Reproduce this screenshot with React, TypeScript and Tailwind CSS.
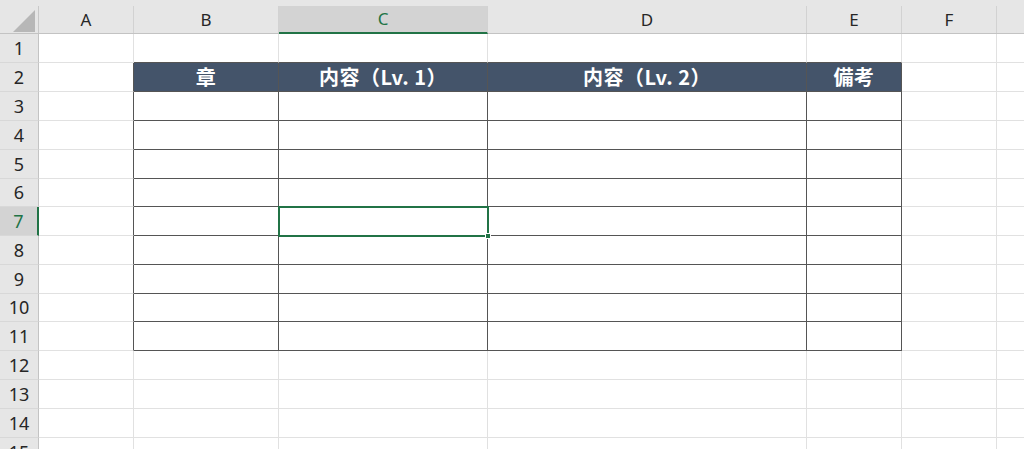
const COLS = [
  { key: 'A', w: 95 },
  { key: 'B', w: 145 },
  { key: 'C', w: 209 },
  { key: 'D', w: 319 },
  { key: 'E', w: 95 },
  { key: 'F', w: 95 },
  { key: 'G', w: 60 },
]

const HEADERS: Record<string, string> = {
  B: '章',
  C: '内容（Lv. 1）',
  D: '内容（Lv. 2）',
  E: '備考',
}

const ROW_H = [29, 29, 29, 29, 29, 28, 29, 29, 29, 28, 29, 29, 29, 29, 29]

const TABLE_COLS = ['B', 'C', 'D', 'E']

function cellClass(row: number, col: string) {
  const inTable = TABLE_COLS.includes(col) && row >= 2 && row <= 11
  const leftOfTable = col === 'A' && row >= 2 && row <= 11
  const aboveTable = TABLE_COLS.includes(col) && row === 1
  const right = inTable || leftOfTable ? 'border-r-[#555]' : 'border-r-[#e1e1e1]'
  const bottom = inTable || aboveTable ? 'border-b-[#555]' : 'border-b-[#e1e1e1]'
  const bg = inTable && row === 2 ? 'bg-[#44546a]' : 'bg-white'
  return `shrink-0 border-r border-b flex items-center justify-center ${right} ${bottom} ${bg}`
}

export default function App() {
  return (
    <div className="relative w-[1024px] h-[449px] overflow-hidden bg-white select-none" style={{ fontFamily: '"Noto Sans", "Open Sans", sans-serif' }}>
      {/* column header */}
      <div className="h-[34px] bg-[#e6e6e6] flex flex-col">
        <div className="h-[6px]" />
        <div className="flex h-[28px] border-b border-[#c3c3c3]">
          <div className="w-[39px] shrink-0 border-r border-[#c8c8c8] relative">
            <svg className="absolute left-[12px] top-[3px]" width="24" height="24" viewBox="0 0 24 24">
              <polygon points="1,23 23,23 23,1" fill="#b7b7b7" />
            </svg>
          </div>
          {COLS.map(c => (
            <div key={c.key} style={{ width: c.w }}
              className={`shrink-0 border-r border-[#d2d2d2] flex items-center justify-center text-[17px] ${c.key === 'C' ? 'bg-[#d3d3d3] text-[#217346] border-b-2 border-b-[#217346] -mb-px' : 'text-[#262626]'}`}>
              {c.key !== 'G' ? c.key : ''}
            </div>
          ))}
        </div>
      </div>

      {/* rows */}
      {ROW_H.map((h, i) => {
        const row = i + 1
        const sel = row === 7
        return (
          <div key={row} className="flex" style={{ height: h }}>
            <div className={`w-[39px] shrink-0 border-b border-b-[#d8d8d8] flex items-center justify-center text-[18px] ${sel ? 'bg-[#d3d3d3] text-[#217346] border-r-2 border-r-[#217346]' : 'bg-[#e6e6e6] text-[#262626] border-r border-r-[#c3c3c3]'}`}>
              {row}
            </div>
            {COLS.map(c => (
              <div key={c.key} style={{ width: c.w }} className={cellClass(row, c.key)}>
                {row === 2 && HEADERS[c.key] && (
                  <span className="text-white font-bold text-[20px] tracking-[0.5px]" style={{ fontFamily: '"Noto Sans CJK JP", "Noto Sans", sans-serif' }}>
                    {HEADERS[c.key]}
                  </span>
                )}
              </div>
            ))}
          </div>
        )
      })}

      {/* active cell C7 */}
      <div className="absolute left-[278px] top-[206px] w-[211px] h-[31px] border-2 border-[#217346] pointer-events-none">
        <div className="absolute right-[-4px] bottom-[-4px] w-[6px] h-[6px] bg-[#217346] border border-white" />
      </div>
    </div>
  )
}
